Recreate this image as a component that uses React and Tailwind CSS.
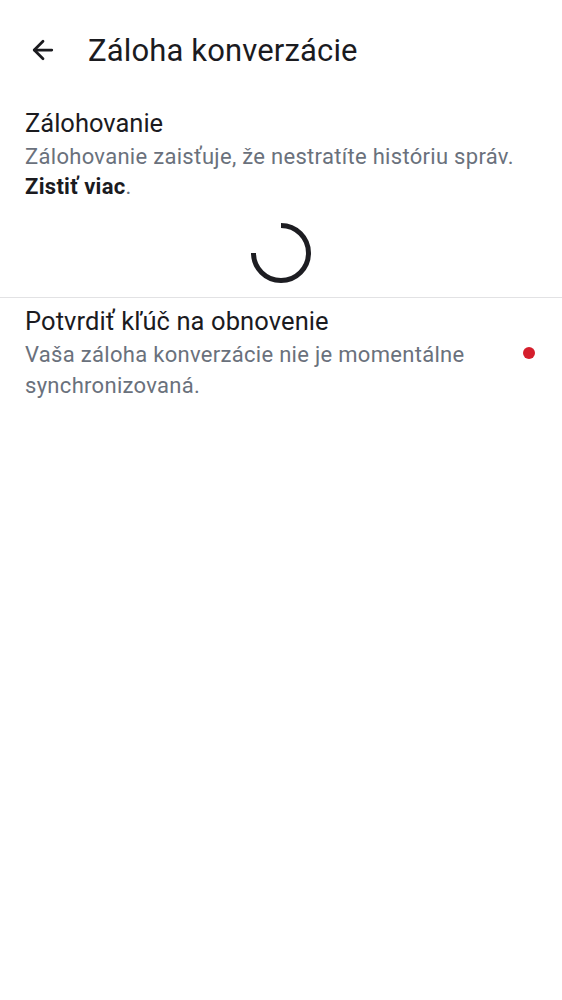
import { ArrowLeft } from "lucide-react";

const font = { fontFamily: "Roboto, 'Noto Sans', sans-serif" };

const SyncSpinner = () => (
  <svg width="64" height="64" viewBox="0 0 64 64" fill="none">
    <path
      d="M32 4.5 A27.5 27.5 0 1 1 4.5 32"
      stroke="#1d1d22"
      strokeWidth="5"
    />
  </svg>
);

export default function App() {
  return (
    <div className="w-[562px] h-[1000px] bg-white text-[#1b1b1f]" style={font}>
      <header className="flex items-center h-[100px] pl-[28px]">
        <ArrowLeft className="w-[30px] h-[30px]" strokeWidth={2.2} />
        <h1 className="ml-[30px] text-[31px] leading-none tracking-[0.15px]">Záloha konverzácie</h1>
      </header>

      <section className="px-[25px] pt-[7px]">
        <h2 className="text-[25.5px] leading-[32px]">Zálohovanie</h2>
        <p className="mt-[3px] text-[22px] leading-[30px] tracking-[0.3px] text-[#6a717c]">
          Zálohovanie zaisťuje, že nestratíte históriu správ.
        </p>
        <p className="text-[22px] leading-[30px] tracking-[0.3px] text-[#6a717c]">
          <span className="font-bold text-[#1b1b1f]">Zistiť viac</span>.
        </p>
      </section>

      <div className="flex justify-center pt-[19px] pb-[12px]">
        <SyncSpinner />
      </div>

      <div className="h-px bg-[#e2e2e4]" />

      <button className="w-full flex items-start px-[25px] pt-[7px] text-left">
        <div className="flex-1">
          <div className="text-[25.5px] leading-[32px] tracking-[0.1px]">Potvrdiť kľúč na obnovenie</div>
          <div className="mt-[2px] text-[22px] leading-[31px] tracking-[0.3px] text-[#6a717c] pr-[40px]">
            Vaša záloha konverzácie nie je momentálne synchronizovaná.
          </div>
        </div>
        <span className="w-[12px] h-[12px] rounded-full bg-[#d51e2c] mt-[42px] mr-[2px]" />
      </button>
    </div>
  );
}
